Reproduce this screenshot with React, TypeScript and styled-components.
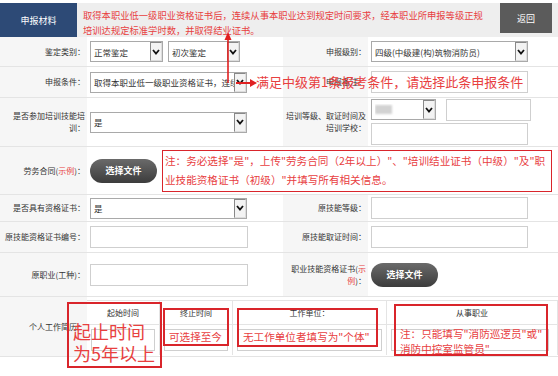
import React from 'react';
import styled, { createGlobalStyle } from 'styled-components';

const Global = createGlobalStyle`
  html, body { margin: 0; padding: 0; background: #fff; }
  body { font-family: "Noto Sans CJK SC", "Microsoft YaHei", sans-serif; color: #333; }
  * { box-sizing: border-box; }
`;

const RED = '#e8403f';
const BOX_RED = '#d9252b';

const Page = styled.div`
  position: relative;
  width: 558px;
  height: 376px;
  overflow: hidden;
  background: #fff;
`;

const Header = styled.div`
  display: flex;
  height: 34px;
  margin-top: 3px;
  background: #eeeeee;
`;

const NavTab = styled.div`
  width: 77px;
  background: #2d4a76;
  color: #fff;
  font-size: 9px;
  display: flex;
  align-items: center;
  justify-content: center;
`;

const HeaderNote = styled.div`
  flex: 1;
  padding: 5px 0 0 6px;
  color: ${RED};
  font-size: 9.3px;
  line-height: 15px;
  white-space: nowrap;
`;

const BackButton = styled.div`
  width: 52px;
  height: 30px;
  margin-right: 6px;
  background: #5b5b5b;
  color: #fff;
  font-size: 9px;
  display: flex;
  align-items: center;
  justify-content: center;
`;

const Row = styled.div<{ $h: number }>`
  display: grid;
  grid-template-columns: 87px 196px 85px 190px;
  height: ${(p) => p.$h}px;
  border-bottom: 1px solid #e4e4e4;
`;

const Label = styled.div`
  background: #f6f6f6;
  display: flex;
  align-items: center;
  justify-content: flex-end;
  padding-right: 2px;
`;

const LabelText = styled.span`
  display: block;
  text-align: right;
  font-size: 8px;
  line-height: 12px;
  color: #333;
  white-space: nowrap;
`;

const Red = styled.span`
  color: ${RED};
`;

const Value = styled.div<{ $span?: number }>`
  grid-column: span ${(p) => p.$span || 1};
  display: flex;
  align-items: center;
  gap: 5px;
  padding-left: 3px;
  min-width: 0;
`;

const Stack = styled.div`
  display: flex;
  flex-direction: column;
  gap: 2px;
`;

const Line = styled.div`
  display: flex;
  gap: 10px;
`;

const SelectBox = styled.div<{ $w: number }>`
  width: ${(p) => p.$w}px;
  height: 21px;
  border: 1px solid #a9a9a9;
  background: #fff;
  display: flex;
  align-items: center;
  font-size: 8.5px;
  color: #333;
  padding-left: 3px;
  overflow: hidden;
`;

const SelectText = styled.span`
  flex: 1;
  overflow: hidden;
  white-space: nowrap;
  min-width: 0;
`;

const SelectArrow = styled.span`
  width: 12px;
  height: 19px;
  flex-shrink: 0;
  border: 1px solid;
  border-color: #888 #ddd #ddd #888;
  background: #f3f3f3;
  display: flex;
  align-items: center;
  justify-content: center;
`;

const Blur = styled.span`
  display: inline-block;
  width: 17px;
  height: 9px;
  background: #d2d2d2;
  filter: blur(0.8px);
`;

const TextInput = styled.input<{ $w: number }>`
  width: ${(p) => p.$w}px;
  height: 22px;
  border: 1px solid #cfcfcf;
  background: #fff;
  outline: none;
  padding: 0 3px;
  font-size: 8.5px;
`;

const FileButton = styled.div`
  width: 67px;
  height: 24px;
  flex-shrink: 0;
  border-radius: 12px;
  background: linear-gradient(#6a6a6a, #3c3c3c);
  color: #fff;
  font-size: 9px;
  font-weight: bold;
  display: flex;
  align-items: center;
  justify-content: center;
`;

const NoteBox = styled.div`
  width: 390px;
  height: 42px;
  border: 1.5px solid ${BOX_RED};
  color: ${RED};
  font-size: 10.6px;
  line-height: 19px;
  padding: 0 2px;
  white-space: nowrap;
  overflow: hidden;
`;

const WorkTable = styled.div`
  grid-column: span 3;
  align-self: start;
  margin-top: 3px;
  display: grid;
  grid-template-columns: 73px 73px 154px 1fr;
  grid-template-rows: 24px 30px;
  border-top: 1px solid #e4e4e4;
`;

const WorkHead = styled.div`
  font-size: 8px;
  display: flex;
  align-items: center;
  justify-content: center;
  border-right: 1px solid #e4e4e4;
  border-bottom: 1px solid #e4e4e4;
`;

const WorkCell = styled.div`
  display: flex;
  align-items: center;
  padding: 0 4px;
  border-right: 1px solid #e4e4e4;
`;

const ArrowSvg = styled.svg`
  position: absolute;
  left: 220px;
  top: 30px;
  pointer-events: none;
`;

const FloatNote = styled.div`
  position: absolute;
  left: 256px;
  top: 73px;
  font-size: 13px;
  line-height: 18px;
  color: ${RED};
  white-space: nowrap;
`;

const MarkBox = styled.div<{ $x: number; $y: number; $w: number; $h: number; $fs: number; $lh: number; $pt: number }>`
  position: absolute;
  left: ${(p) => p.$x}px;
  top: ${(p) => p.$y}px;
  width: ${(p) => p.$w}px;
  height: ${(p) => p.$h}px;
  border: 2px solid ${BOX_RED};
  color: ${RED};
  font-size: ${(p) => p.$fs}px;
  line-height: ${(p) => p.$lh}px;
  padding: ${(p) => p.$pt}px 0 0 4px;
  white-space: nowrap;
  pointer-events: none;
`;

const Chevron = () => (
  <svg width="8" height="6" viewBox="0 0 8 6">
    <path d="M1 1 L4 4.5 L7 1" fill="none" stroke="#111" strokeWidth="1.8" />
  </svg>
);

const Select = ({ w, children }: { w: number; children?: React.ReactNode }) => (
  <SelectBox $w={w}>
    <SelectText>{children}</SelectText>
    <SelectArrow>
      <Chevron />
    </SelectArrow>
  </SelectBox>
);

const FieldLabel = ({ children }: { children: React.ReactNode }) => (
  <Label>
    <LabelText>{children}</LabelText>
  </Label>
);

export default function App() {
  return (
    <Page>
      <Global />
      <Header>
        <NavTab>申报材料</NavTab>
        <HeaderNote>
          取得本职业低一级职业资格证书后，连续从事本职业达到规定时间要求，经本职业所申报等级正规
          <br />
          培训达规定标准学时数，并取得结业证书。
        </HeaderNote>
        <BackButton>返回</BackButton>
      </Header>

      <Row $h={30}>
        <FieldLabel>鉴定类别：</FieldLabel>
        <Value>
          <Select w={73}>正常鉴定</Select>
          <Select w={72}>初次鉴定</Select>
        </Value>
        <FieldLabel>申报级别：</FieldLabel>
        <Value>
          <Select w={157}>四级(中级建(构)筑物消防员)</Select>
        </Value>
      </Row>

      <Row $h={31}>
        <FieldLabel>申报条件：</FieldLabel>
        <Value>
          <Select w={157}>取得本职业低一级职业资格证书，连续从事本职业</Select>
        </Value>
        <FieldLabel>申报备注：</FieldLabel>
        <Value>
          <TextInput $w={157} readOnly />
        </Value>
      </Row>

      <Row $h={49}>
        <FieldLabel>
          是否参加培训技能培
          <br />
          训：
        </FieldLabel>
        <Value>
          <Select w={157}>是</Select>
        </Value>
        <FieldLabel>
          培训等级、取证时间及
          <br />
          培训学校：
        </FieldLabel>
        <Value>
          <Stack>
            <Line>
              <Select w={65}>
                <Blur />
              </Select>
              <TextInput $w={85} readOnly />
            </Line>
            <TextInput $w={157} readOnly />
          </Stack>
        </Value>
      </Row>

      <Row $h={48}>
        <FieldLabel>
          劳务合同(<Red>示例</Red>)：
        </FieldLabel>
        <Value $span={3}>
          <FileButton>选择文件</FileButton>
          <NoteBox>
            注：务必选择"是"，上传"劳务合同（2年以上）"、"培训结业证书（中级）"及"职
            <br />
            业技能资格证书（初级）"并填写所有相关信息。
          </NoteBox>
        </Value>
      </Row>

      <Row $h={27}>
        <FieldLabel>是否具有资格证书：</FieldLabel>
        <Value>
          <Select w={157}>是</Select>
        </Value>
        <FieldLabel>原技能等级：</FieldLabel>
        <Value>
          <TextInput $w={157} readOnly />
        </Value>
      </Row>

      <Row $h={31}>
        <FieldLabel>原技能资格证书编号：</FieldLabel>
        <Value>
          <TextInput $w={158} readOnly />
        </Value>
        <FieldLabel>原技能取证时间：</FieldLabel>
        <Value>
          <TextInput $w={157} readOnly />
        </Value>
      </Row>

      <Row $h={44}>
        <FieldLabel>原职业(工种)：</FieldLabel>
        <Value>
          <TextInput $w={158} readOnly />
        </Value>
        <FieldLabel>
          职业技能资格证书(<Red>示</Red>
          <br />
          <Red>例</Red>)：
        </FieldLabel>
        <Value>
          <FileButton>选择文件</FileButton>
        </Value>
      </Row>

      <Row $h={60}>
        <FieldLabel>个人工作简历：</FieldLabel>
        <WorkTable>
          <WorkHead>起始时间</WorkHead>
          <WorkHead>终止时间</WorkHead>
          <WorkHead>工作单位：</WorkHead>
          <WorkHead>从事职业</WorkHead>
          <WorkCell>
            <TextInput $w={64} readOnly />
          </WorkCell>
          <WorkCell>
            <TextInput $w={64} readOnly />
          </WorkCell>
          <WorkCell>
            <TextInput $w={146} readOnly />
          </WorkCell>
          <WorkCell>
            <TextInput $w={158} readOnly />
          </WorkCell>
        </WorkTable>
      </Row>

      <ArrowSvg width="42" height="60" viewBox="0 0 42 60">
        <line x1="8" y1="8" x2="8" y2="53" stroke="#e02020" strokeWidth="1.6" />
        <polygon points="8,2 4.5,10 11.5,10" fill="#e02020" />
        <line x1="16" y1="53" x2="31" y2="53" stroke="#e02020" strokeWidth="2" />
        <polygon points="37,53 30,49 30,57" fill="#e02020" />
      </ArrowSvg>
      <FloatNote>满足中级第1条报考条件，请选择此条申报条件</FloatNote>

      <MarkBox $x={67} $y={302} $w={95} $h={66} $fs={18} $lh={22} $pt={16}>
        起止时间
        <br />
        为5年以上
      </MarkBox>
      <MarkBox $x={163} $y={308} $w={66} $h={38} $fs={10.6} $lh={14} $pt={20}>
        可选择至今
      </MarkBox>
      <MarkBox $x={237} $y={308} $w={141} $h={39} $fs={10.6} $lh={14} $pt={20}>
        无工作单位者填写为"个体"
      </MarkBox>
      <MarkBox $x={394} $y={304} $w={154} $h={52} $fs={10.6} $lh={15} $pt={20}>
        注：只能填写"消防巡逻员"或"
        <br />
        消防中控室监管员"
      </MarkBox>
    </Page>
  );
}
